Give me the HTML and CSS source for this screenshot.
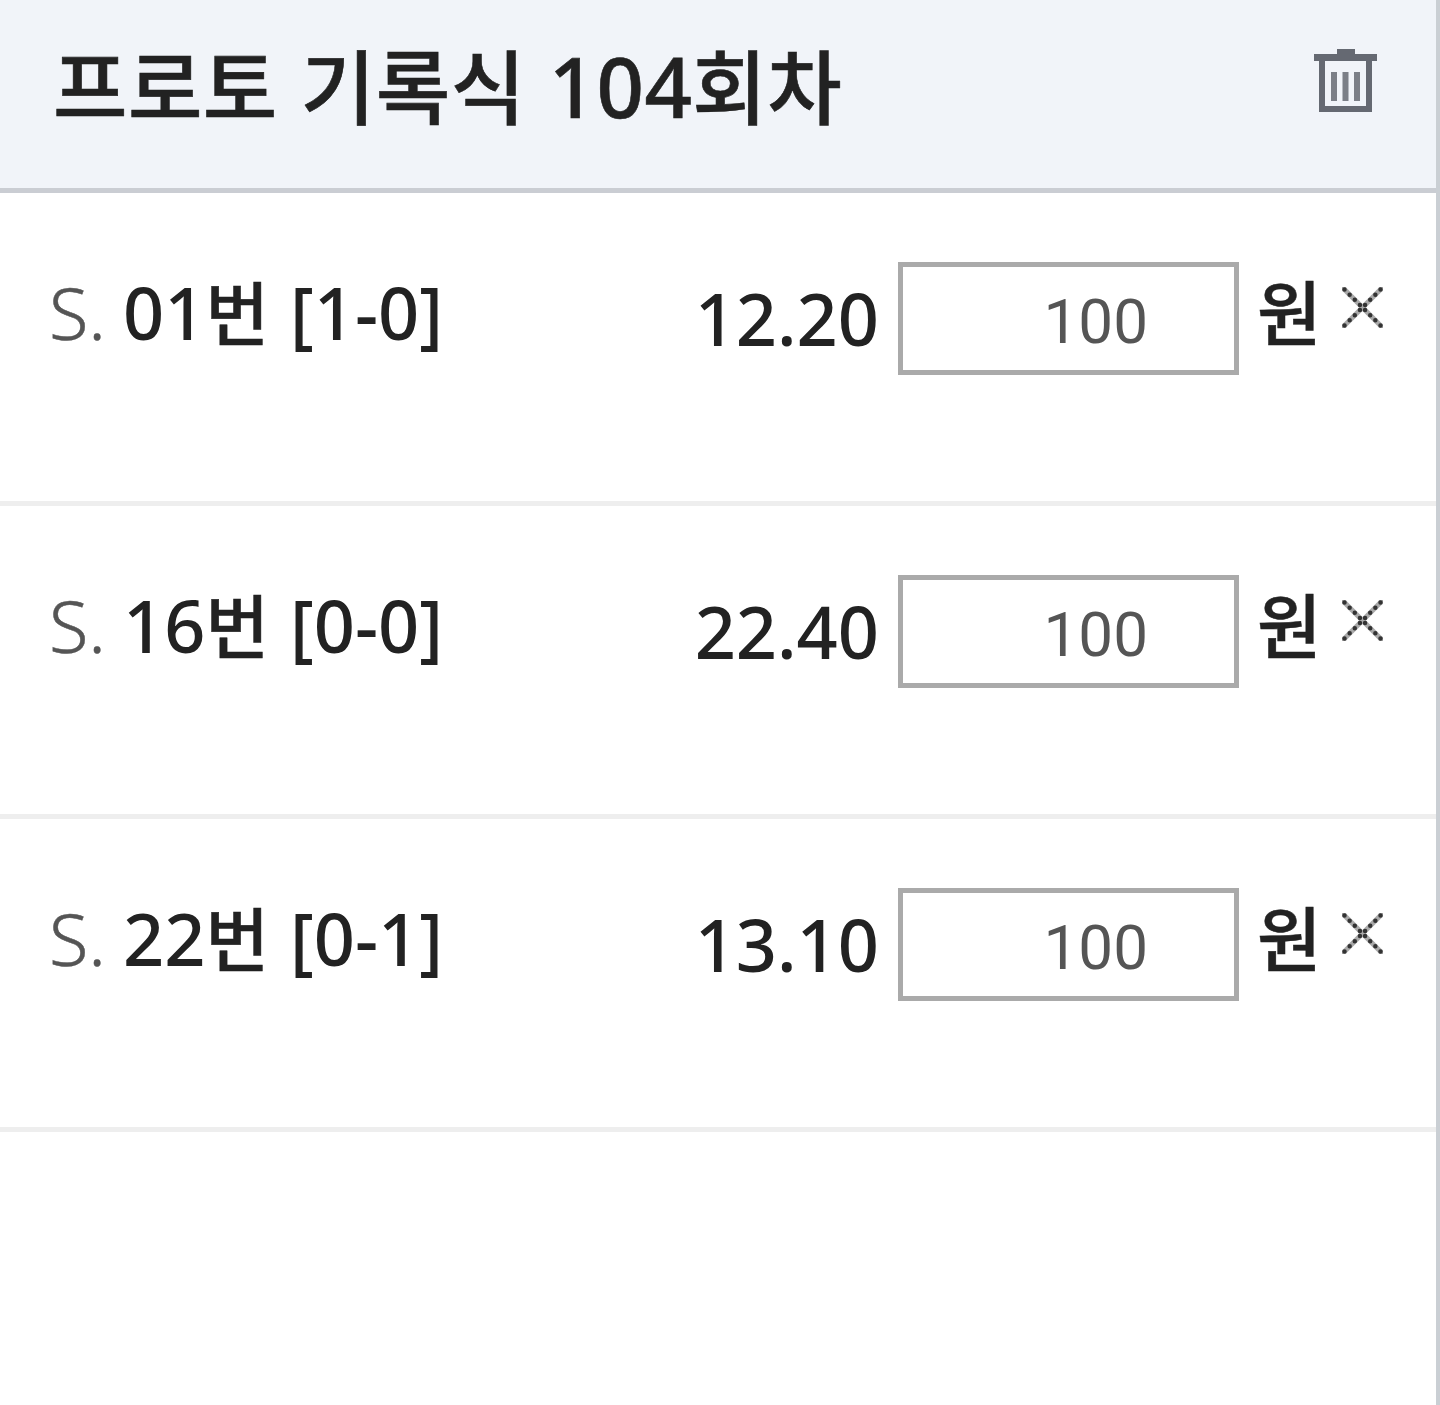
FILE: index.html
```
<!DOCTYPE html>
<html lang="ko">
<head>
    <meta charset="UTF-8">
    <meta name="viewport" content="width=device-width, initial-scale=1.0">
    <title>프로토 기록식 104회차</title>
    <link rel="stylesheet" href="styles.css">
</head>
<body>
    <div class="slip">
        <div class="slip-header">
            <h1 class="slip-title">프로토 기록식 <span class="round">104</span>회차</h1>
            <button class="btn-trash" aria-label="전체 삭제">
                <svg width="63" height="63" viewBox="0 0 63 63">
                    <path d="M23 0h18v5h22v7h-5v51H5V12H0V5h23zM11 12v45h41V12z" fill="#656972" fill-rule="evenodd"/>
                    <path d="M20 23v29M31.500 23v29M43 23v29" stroke="#7b7f87" stroke-width="6"/>
                </svg>
            </button>
        </div>
        <ul class="bet-list">
            <li class="bet">
                <span class="type">S.</span>
                <span class="pick"><span class="no">01</span>번</span>
                <span class="score">[1-0]</span>
                <span class="odds">12.20</span>
                <input class="amount" type="text" value="100">
                <span class="unit">원</span>
                <button class="btn-del" aria-label="삭제">
                    <svg width="41" height="41" viewBox="0 0 41 41">
                        <path class="line" d="M0 0l41 41M41 0L0 41"/>
                        <path class="dots" d="M2.500 2.500l36 36M38.500 2.500l-36 36"/>
                    </svg>
                </button>
            </li>
            <li class="bet">
                <span class="type">S.</span>
                <span class="pick"><span class="no">16</span>번</span>
                <span class="score">[0-0]</span>
                <span class="odds">22.40</span>
                <input class="amount" type="text" value="100">
                <span class="unit">원</span>
                <button class="btn-del" aria-label="삭제">
                    <svg width="41" height="41" viewBox="0 0 41 41">
                        <path class="line" d="M0 0l41 41M41 0L0 41"/>
                        <path class="dots" d="M2.500 2.500l36 36M38.500 2.500l-36 36"/>
                    </svg>
                </button>
            </li>
            <li class="bet">
                <span class="type">S.</span>
                <span class="pick"><span class="no">22</span>번</span>
                <span class="score">[0-1]</span>
                <span class="odds">13.10</span>
                <input class="amount" type="text" value="100">
                <span class="unit">원</span>
                <button class="btn-del" aria-label="삭제">
                    <svg width="41" height="41" viewBox="0 0 41 41">
                        <path class="line" d="M0 0l41 41M41 0L0 41"/>
                        <path class="dots" d="M2.500 2.500l36 36M38.500 2.500l-36 36"/>
                    </svg>
                </button>
            </li>
        </ul>
    </div>
</body>
</html>
```
FILE: styles.css
```
* {
    box-sizing: border-box;
}

body {
    margin: 0;
    font-family: "Noto Sans", "Noto Sans CJK KR", sans-serif;
    color: #222;
    background-color: #fff;
}

button {
    padding: 0;
    border: none;
    background: none;
    cursor: pointer;
}

svg {
    display: block;
}

.slip {
    min-height: 1405px;
    border-right: 4px solid #cacfd4;
}

.slip-header {
    display: flex;
    justify-content: space-between;
    align-items: flex-start;
    height: 193px;
    padding: 0 59px 0 53px;
    background-color: #f1f4f9;
    border-bottom: 5px solid #cacdd3;
}

.slip-title {
    margin: 28px 0 0;
    font-family: "Noto Sans CJK KR", sans-serif;
    font-size: 81px;
    font-weight: 500;
    line-height: 110px;
    letter-spacing: 0.4px;
    white-space: nowrap;
    -webkit-text-stroke: 0.6px #222;
}

.round {
    font-family: "Noto Sans", sans-serif;
    font-size: 83px;
    font-weight: 500;
}

.btn-trash {
    margin-top: 49px;
}

.bet-list {
    margin: 0;
    padding: 0;
    list-style: none;
}

.bet {
    display: flex;
    align-items: flex-start;
    height: 313px;
    padding: 69px 53px 0 48px;
    border-bottom: 5px solid #eee;
    font-size: 72px;
    font-weight: 500;
    line-height: 100px;
    white-space: nowrap;
}

.type {
    width: 75px;
    padding-left: 1px;
    color: #555;
    font-weight: 300;
    -webkit-text-stroke: 0.5px #555;
}

.pick {
    width: 167px;
    margin-top: -2px;
    font-family: "Noto Sans CJK KR", sans-serif;
    font-size: 69px;
    -webkit-text-stroke: 0.5px #222;
}

.no {
    font-family: "Noto Sans", sans-serif;
    font-size: 72px;
    -webkit-text-stroke: 0;
}

.odds {
    margin: 6px 19px 0 auto;
}

.amount {
    width: 341px;
    height: 113px;
    padding: 5px 86px 0 10px;
    border: 5px solid #aaa;
    border-radius: 0;
    font-family: Roboto, sans-serif;
    font-size: 62px;
    color: #555;
    text-align: right;
}

.unit {
    width: 66px;
    margin: -2px 0 0 18px;
    font-family: "Noto Sans CJK KR", sans-serif;
    font-size: 70px;
    -webkit-text-stroke: 0.5px #222;
}

.btn-del {
    margin: 25px 0 0 19px;
}

.btn-del .line {
    stroke: #aaa;
    stroke-width: 5;
}

.btn-del .dots {
    stroke: #333;
    stroke-width: 4.5;
    stroke-linecap: round;
    stroke-dasharray: 0 7.27;
}
```
